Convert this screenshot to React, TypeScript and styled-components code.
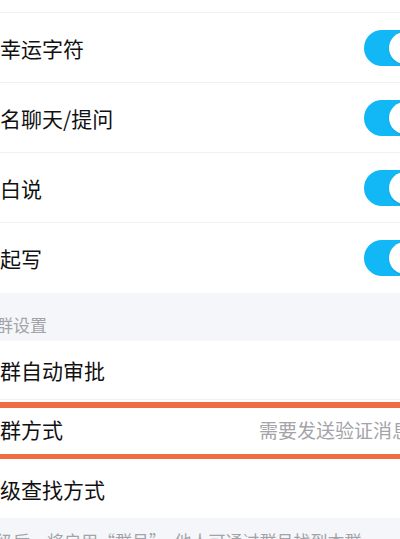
import React from "react";
import styled, { createGlobalStyle } from "styled-components";

const GlobalStyle = createGlobalStyle`
  html, body {
    margin: 0;
    padding: 0;
    background: #ffffff;
    overflow: hidden;
  }
  * { box-sizing: border-box; }
`;

const FONT = `"PingFang SC", "Noto Sans CJK SC", "Noto Sans", sans-serif`;

const Viewport = styled.div`
  width: 400px;
  height: 539px;
  overflow: hidden;
  background: #f5f6f9;
  font-family: ${FONT};
`;

const Screen = styled.div`
  width: 476px;
  margin-left: -37px;
  margin-top: -57px;
  display: flex;
  flex-direction: column;
`;

const Group = styled.div`
  background: #ffffff;
  display: flex;
  flex-direction: column;
`;

const Row = styled.div<{ $h: number; $divider?: boolean }>`
  position: relative;
  height: ${(p) => p.$h}px;
  padding: 0 16px;
  display: flex;
  align-items: center;
  justify-content: space-between;
  border-bottom: ${(p) => (p.$divider ? "1px solid #f1f1f4" : "none")};
  background: #ffffff;
`;

const Label = styled.span`
  font-size: 21px;
  color: #111111;
  white-space: nowrap;
`;

const Right = styled.div`
  display: flex;
  align-items: center;
  gap: 4px;
`;

const Value = styled.span`
  font-size: 19px;
  color: #a3a3a8;
  white-space: nowrap;
`;

const Chevron = styled.svg`
  width: 8px;
  height: 14px;
  flex: none;
`;

const Toggle = styled.div<{ $on: boolean }>`
  position: relative;
  width: 59px;
  height: 36px;
  border-radius: 18px;
  background: ${(p) => (p.$on ? "#12b7f5" : "#e5e5ea")};
  flex: none;
`;

const Knob = styled.div<{ $on: boolean }>`
  position: absolute;
  top: 2px;
  left: ${(p) => (p.$on ? "25px" : "2px")};
  width: 32px;
  height: 32px;
  border-radius: 50%;
  background: #ffffff;
  box-shadow: 0 1px 2px rgba(0, 0, 0, 0.12);
`;

const SectionHeader = styled.div`
  height: 48px;
  padding: 0 16px 6px;
  display: flex;
  align-items: flex-end;
  font-size: 17px;
  line-height: 20px;
  color: #a2a3a8;
`;

const Footnote = styled.div`
  padding: 13px 16px 0;
  font-size: 17px;
  line-height: 20px;
  color: #a2a3a8;
  white-space: nowrap;
`;

const Highlight = styled.div`
  position: absolute;
  top: 2px;
  bottom: -2px;
  left: -20px;
  right: -20px;
  border: 6px solid #ee6d42;
  pointer-events: none;
`;

const Switch = ({ on }: { on: boolean }) => (
  <Toggle $on={on}>
    <Knob $on={on} />
  </Toggle>
);

const toggles = [
  { label: "群聊打卡", divider: true },
  { label: "群幸运字符", divider: true },
  { label: "匿名聊天/提问", divider: true },
  { label: "坦白说", divider: true },
  { label: "一起写", divider: false },
];

export default function App() {
  return (
    <>
      <GlobalStyle />
      <Viewport>
        <Screen>
          <Group>
            {toggles.map((t) => (
              <Row key={t.label} $h={70} $divider={t.divider}>
                <Label>{t.label}</Label>
                <Switch on />
              </Row>
            ))}
          </Group>
          <SectionHeader>加群设置</SectionHeader>
          <Group>
            <Row $h={59} $divider>
              <Label>新群自动审批</Label>
            </Row>
            <Row $h={59} $divider>
              <Label>加群方式</Label>
              <Right>
                <Value>需要发送验证消息</Value>
                <Chevron viewBox="0 0 8 14">
                  <path d="M1 1l6 6-6 6" fill="none" stroke="#c4c4c8" strokeWidth="1.6" />
                </Chevron>
              </Right>
              <Highlight />
            </Row>
            <Row $h={59}>
              <Label>分级查找方式</Label>
            </Row>
          </Group>
          <Footnote>分级后，将启用“群号”，他人可通过群号找到本群</Footnote>
        </Screen>
      </Viewport>
    </>
  );
}
